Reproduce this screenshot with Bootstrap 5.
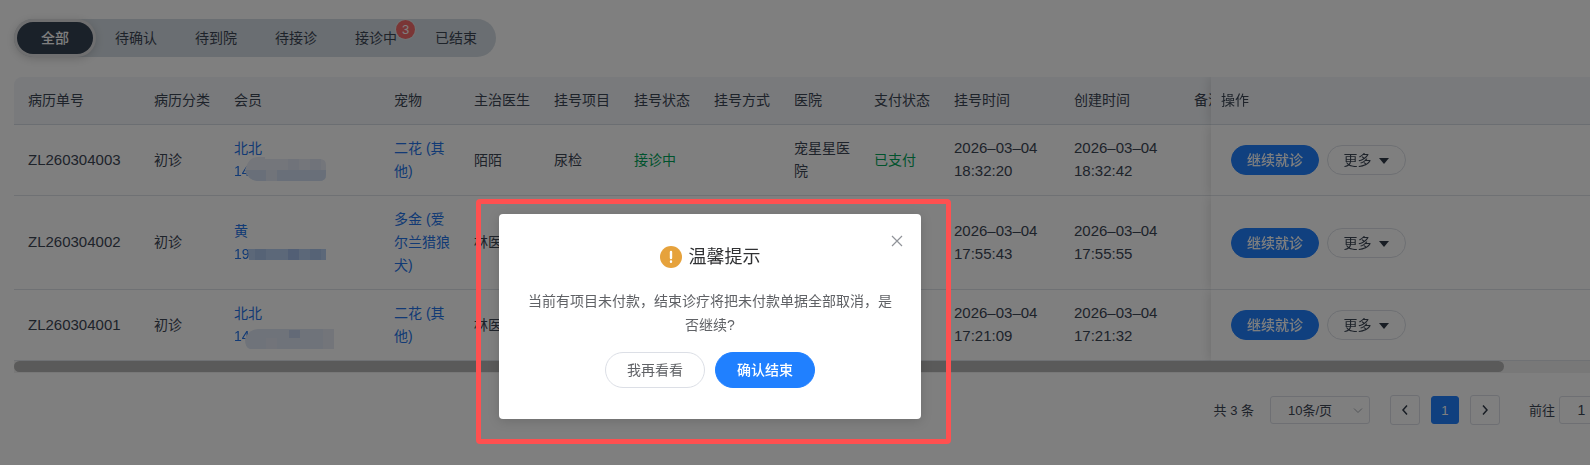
<!DOCTYPE html>
<html lang="zh-CN">
<head>
<meta charset="utf-8">
<meta name="viewport" content="width=device-width, initial-scale=1">
<title>病历列表</title>
<link href="https://cdn.jsdelivr.net/npm/bootstrap@5.3.0/dist/css/bootstrap.min.css" rel="stylesheet">
<style>
  body { font: 14px/23px "Liberation Sans", "Noto Sans CJK SC", sans-serif; color: #3c4655; background: #fff; min-height: 100vh; position: relative; overflow-x: hidden; }
  .num { font-size: 15px; }
  .page-wrap { padding: 19px 0 0 14px; }

  .status-tabs { background: #d5dde4; border-radius: 19px; padding: 0 0 0 2px; height: 38px; width: max-content; }
  .status-tabs button { width: 80px; height: 38px; border: 0; background: none; padding: 1px 0 0; color: #3c4655; position: relative; }
  .status-tabs .current { height: 32px; width: 76px; margin: 0 3px 0 1px; border-radius: 16px; background: #344252; color: #fff; font-weight: 500; box-shadow: 0 0 0 3px #dedfe0, 0 2px 12px rgba(0,0,0,.3); }
  .tab-count { position: absolute; left: 60px; top: 1px; width: 19px; height: 19px; border-radius: 10px; background: #f56c6c; color: #fff; font-size: 13px; line-height: 19px; box-shadow: 0 0 0 1px #e4e6e8; }

  .record-wrap { margin-top: 20px; overflow: hidden; border-top-left-radius: 8px; }
  .record-table { table-layout: fixed; width: calc(100% + 83px); min-width: 1300px; margin: 0; border-collapse: separate; border-spacing: 0; }
  .record-table th, .record-table td { padding: 12px 10px; font-weight: 400; border-bottom: 1px solid #dfe3e8; vertical-align: middle; background: #fff; overflow: hidden; }
  .record-table .num { padding-top: 11px; padding-bottom: 13px; }
  .record-table th { background: #f2f5f9; border-color: #d6dde4; white-space: nowrap; }
  .record-table th:first-child, .record-table td:first-child { padding-left: 14px; }
  .record-table .ops { position: sticky; right: 0; overflow: visible; box-shadow: -2px 0 10px rgba(0,0,0,.12); clip-path: inset(0 0 0 -14px); }
  .record-table a { color: #2474ea; text-decoration: none; }
  .ok { color: #00a65a !important; }
  .phone { position: relative; display: block; }
  .phone svg { position: absolute; left: 10px; top: -4px; }
  .ops .btn { height: 30px; border-radius: 15px; padding: 0; font-size: 14px; line-height: 28px; }
  .btn-go { width: 88px; margin-left: 10px; background: #2080ff; border-color: #2080ff; color: #fff; font-weight: 500; }
  .btn-more { width: 79px; margin-left: 8px; border-color: #dcdfe6; background: #fff; color: #3c4655; }
  .btn-more svg { margin-left: 4px; vertical-align: 1px; }
  .scroll-track { height: 12px; background: #f1f1f1; }
  .scroll-thumb { width: 94.55%; height: 11px; border-radius: 6px; background: #b4b4b4; }

  .pager { margin: 22px -14px 0 0; font-size: 13px; height: 30px; }
  .pager select { width: 100px; height: 28px; margin: 0 20px 0 16px; padding: 0 0 0 17px; border: 1px solid #dcdfe6; border-radius: 3px; appearance: none; color: #3c4655; font-size: 13px; background: #fff; }
  .select-box { position: relative; }
  .select-box svg { position: absolute; right: 27px; top: 11px; }
  .pager button { width: 30px; height: 30px; border: 1px solid #dcdfe6; border-radius: 3px; background: #fff; padding: 0; display: flex; align-items: center; justify-content: center; }
  .pager .page-now { width: 28px; height: 28px; margin: 0 11px; background: #2080ff; border-color: #2080ff; color: #fff; }
  .pager .goto-label { margin-left: 29px; }
  .pager input { width: 45px; height: 28px; border: 1px solid #dcdfe6; border-radius: 3px; text-align: center; color: #3c4655; font-size: 14px; padding: 0; margin-left: 4px; }

  .shade { position: fixed; inset: 0; background: rgba(0,0,0,.5); }
  .red-frame { position: absolute; left: 476px; top: 199px; width: 475px; height: 245px; border: 5px solid #ff5050; border-radius: 4px; }
  .notice { position: absolute; left: 499px; top: 214px; width: 422px; background: #fff; border-radius: 4px; padding: 30px 28px 31px; text-align: center; color: #606266; box-shadow: 0 2px 12px rgba(0,0,0,.15); }
  .notice h1 { font-size: 18px; line-height: 26px; font-weight: 400; color: #303133; margin: 0 0 19px; gap: 7px; }
  .notice p { line-height: 24px; margin: 0 0 15px; }
  .notice .shut { position: absolute; right: 16px; top: 19px; width: 16px; height: 16px; border: 0; background: none; padding: 0; display: flex; align-items: center; justify-content: center; }
  .notice .btn-row { gap: 10px; }
  .notice .btn { width: 100px; height: 36px; border-radius: 18px; padding: 0; font-size: 14px; }
  .btn-look { border-color: #dcdfe6; color: #606266; }
  .btn-sure { background: #2080ff; border-color: #2080ff; color: #fff; font-weight: 500; }
</style>
</head>
<body>
<main class="page-wrap">
  <nav class="status-tabs d-flex align-items-center">
    <button class="current" type="button">全部</button>
    <button type="button">待确认</button>
    <button type="button">待到院</button>
    <button type="button">待接诊</button>
    <button type="button">接诊中<span class="tab-count">3</span></button>
    <button type="button">已结束</button>
  </nav>

  <div class="record-wrap">
    <table class="record-table">
      <colgroup>
        <col style="width:130px"><col style="width:80px"><col style="width:160px"><col style="width:80px"><col style="width:80px"><col style="width:80px"><col style="width:80px"><col style="width:80px"><col style="width:80px"><col style="width:80px"><col style="width:120px"><col style="width:120px"><col style="width:110px"><col>
      </colgroup>
      <thead>
        <tr><th>病历单号</th><th>病历分类</th><th>会员</th><th>宠物</th><th>主治医生</th><th>挂号项目</th><th>挂号状态</th><th>挂号方式</th><th>医院</th><th>支付状态</th><th>挂号时间</th><th>创建时间</th><th>备注</th><th class="ops">操作</th></tr>
      </thead>
      <tbody>
        <tr>
          <td class="num">ZL260304003</td><td>初诊</td>
          <td><a href="#">北北<span class="phone">14<svg width="84" height="30"><path d="M1 14C4 4 8 1 14 1H21V3H76Q82 3 82 9V19Q82 25 75 25H13Q4 24 1 14Z" fill="#e9edf6"/><path d="M1 14H82V19Q82 25 75 25H13Q4 24 1 14Z" fill="#d2dff3"/><path d="M22 14h11v11H22z" fill="#e2e8f5"/><path d="M44 3h11v11H44zM66 3h11v11H66z" fill="#e0e7f4"/></svg></span></a></td>
          <td><a href="#">二花 (其他)</a></td><td>陌陌</td><td>尿检</td><td class="ok">接诊中</td><td></td><td>宠星星医院</td><td class="ok">已支付</td>
          <td class="num">2026–03–04 18:32:20</td><td class="num">2026–03–04 18:32:42</td><td></td>
          <td class="ops"><button class="btn btn-go" type="button">继续就诊</button><button class="btn btn-more" type="button">更多 <svg width="10" height="6"><path d="M0 0h10L5 6z" fill="#303a48"/></svg></button></td>
        </tr>
        <tr>
          <td class="num">ZL260304002</td><td>初诊</td>
          <td><a href="#">黄<span class="phone">19<svg width="84" height="30"><path d="M4 10H82V21H5Z" fill="#b9d0f2"/><path d="M11 10h11v11H11zM66 10h11v11H66z" fill="#adc7ec"/><path d="M44 10h11v11H44z" fill="#a4bfea"/></svg></span></a></td>
          <td><a href="#">多金 (爱尔兰猎狼犬)</a></td><td>林医生</td><td></td><td></td><td></td><td></td><td></td>
          <td class="num">2026–03–04 17:55:43</td><td class="num">2026–03–04 17:55:55</td><td></td>
          <td class="ops"><button class="btn btn-go" type="button">继续就诊</button><button class="btn btn-more" type="button">更多 <svg width="10" height="6"><path d="M0 0h10L5 6z" fill="#303a48"/></svg></button></td>
        </tr>
        <tr>
          <td class="num">ZL260304001</td><td>初诊</td>
          <td><a href="#">北北<span class="phone">14<svg width="92" height="30"><path d="M1 18Q5 8 14 8H90V28H6Q1 27 1 18Z" fill="#dee6f4"/><path d="M22 17h11v11H22z" fill="#e4e8f4"/><path d="M79 8h11v20H79z" fill="#e6ebf5"/><path d="M45 9h11v8H45z" fill="#c7d4ee"/></svg></span></a></td>
          <td><a href="#">二花 (其他)</a></td><td>林医生</td><td></td><td></td><td></td><td></td><td></td>
          <td class="num">2026–03–04 17:21:09</td><td class="num">2026–03–04 17:21:32</td><td></td>
          <td class="ops"><button class="btn btn-go" type="button">继续就诊</button><button class="btn btn-more" type="button">更多 <svg width="10" height="6"><path d="M0 0h10L5 6z" fill="#303a48"/></svg></button></td>
        </tr>
      </tbody>
    </table>
    <div class="scroll-track"><div class="scroll-thumb"></div></div>
  </div>

  <div class="pager d-flex align-items-center justify-content-end">
    <span>共 3 条</span>
    <label class="select-box"><select aria-label="每页条数"><option>10条/页</option></select><svg width="10" height="8" fill="none" stroke="#a8abb2"><path d="M1 1.500l4 4 4-4"/></svg></label>
    <button type="button" aria-label="上一页"><svg width="8" height="12" fill="none" stroke="#303a48" stroke-width="1.500"><path d="M6 1.500L2 6l4 4.500"/></svg></button>
    <button class="page-now" type="button">1</button>
    <button type="button" aria-label="下一页"><svg width="8" height="12" fill="none" stroke="#303a48" stroke-width="1.500"><path d="M2 1.500L6 6l-4 4.500"/></svg></button>
    <label class="goto-label" for="goto">前往</label><input id="goto" type="text" value="1">
  </div>
</main>

<div class="shade"></div>
<section class="notice" role="dialog" aria-labelledby="notice-title">
  <button class="shut" type="button" aria-label="关闭"><svg width="12" height="12" stroke="#909399" stroke-width="1.200"><path d="M1 1l10 10M11 1L1 11"/></svg></button>
  <h1 id="notice-title" class="d-flex align-items-center justify-content-center"><svg width="22" height="22"><circle cx="11" cy="11" r="11" fill="#e6a23c"/><path d="M11 6v6M11 15.500v.2" stroke="#fff" stroke-width="2.400" stroke-linecap="round"/></svg>温馨提示</h1>
  <p>当前有项目未付款，结束诊疗将把未付款单据全部取消，是否继续?</p>
  <div class="btn-row d-flex justify-content-center">
    <button class="btn btn-look" type="button">我再看看</button>
    <button class="btn btn-sure" type="button">确认结束</button>
  </div>
</section>
<div class="red-frame"></div>
<script src="https://cdn.jsdelivr.net/npm/bootstrap@5.3.0/dist/js/bootstrap.bundle.min.js"></script>
</body>
</html>
